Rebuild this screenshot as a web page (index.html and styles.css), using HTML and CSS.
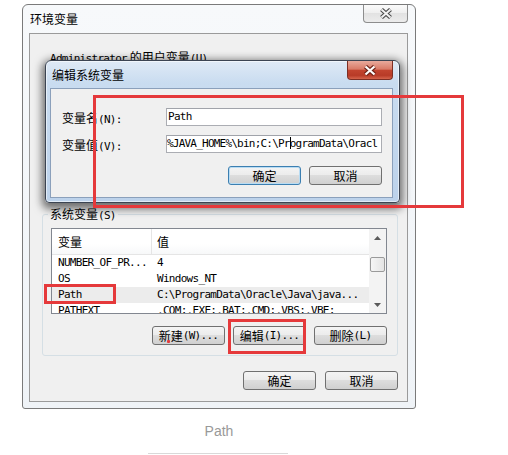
FILE: index.html
```html
<!DOCTYPE html>
<html lang="zh-CN">
<head>
<meta charset="utf-8">
<title>环境变量</title>
<link rel="stylesheet" href="styles.css">
</head>
<body>
<div class="page">
  <div class="win">
    <div class="win-title">环境变量</div>
    <div class="close close-light">
      <svg width="14" height="11" viewBox="0 0 14 11"><path d="M2.5 1.5 L11.5 9.5 M11.5 1.5 L2.5 9.5" stroke="#4b4b4b" stroke-width="4.2" fill="none"/><path d="M2.5 1.5 L11.5 9.5 M11.5 1.5 L2.5 9.5" stroke="#f2f2f2" stroke-width="2" fill="none"/></svg>
    </div>
    <div class="client">
      <div class="user-label"><span class="m">Administrator</span> 的用户变量<span class="m">(U)</span></div>
      <div class="user-group"></div>
      <fieldset class="group">
        <legend>系统变量<span class="m">(S)</span></legend>
        <div class="list">
          <div class="list-main">
            <div class="list-head"><div class="c1">变量</div><div class="c2">值</div></div>
            <div class="row"><div class="c1 m">NUMBER_OF_PR...</div><div class="c2 m">4</div></div>
            <div class="row"><div class="c1 m">OS</div><div class="c2 m">Windows_NT</div></div>
            <div class="row row-sel"><div class="c1 m">Path</div><div class="c2 m">C:\ProgramData\Oracle\Java\java...</div></div>
            <div class="row"><div class="c1 m">PATHEXT</div><div class="c2 m">.COM;.EXE;.BAT;.CMD;.VBS;.VBE;</div></div>
          </div>
          <div class="scroll">
            <div class="sb-btn"><svg width="7" height="4" viewBox="0 0 7 4"><path d="M0 4 L3.5 0 L7 4Z" fill="#5a5a5a"/></svg></div>
            <div class="sb-track"><div class="thumb"></div></div>
            <div class="sb-btn"><svg width="7" height="4" viewBox="0 0 7 4"><path d="M0 0 L3.5 4 L7 0Z" fill="#5a5a5a"/></svg></div>
          </div>
        </div>
        <div class="btns">
          <div class="btn">新建<span class="m">(W)...</span></div>
          <div class="btn">编辑<span class="m">(I)...</span></div>
          <div class="btn">删除<span class="m">(L)</span></div>
        </div>
      </fieldset>
      <div class="btns btns-bottom">
        <div class="btn">确定</div>
        <div class="btn">取消</div>
      </div>
    </div>
  </div>
  <div class="caption">Path</div>
  <div class="caption-line"></div>
</div>

<div class="dlg">
  <div class="dlg-title">编辑系统变量</div>
  <div class="close close-red">
    <svg width="14" height="11" viewBox="0 0 14 11"><path d="M2.5 1.5 L11.5 9.5 M11.5 1.5 L2.5 9.5" stroke="#6e2419" stroke-width="4.4" fill="none"/><path d="M2.5 1.5 L11.5 9.5 M11.5 1.5 L2.5 9.5" stroke="#ffffff" stroke-width="2.2" fill="none"/></svg>
  </div>
  <div class="dlg-client">
    <div class="form">
      <div class="lbl">变量名<span class="m">(N):</span></div>
      <div class="field m">Path</div>
      <div class="lbl">变量值<span class="m">(V):</span></div>
      <div class="field field-tight m">%JAVA_HOME%\bin;C:\Pr<span class="caret"></span>ogramData\Oracl</div>
    </div>
    <div class="btns dlg-btns">
      <div class="btn btn-default">确定</div>
      <div class="btn">取消</div>
    </div>
  </div>
</div>

<div class="mark mark-a"></div>
<div class="mark mark-b"></div>
<div class="mark mark-c"></div>
<div class="dot"></div>
</body>
</html>
```

FILE: styles.css
```css
html, body {
  margin: 0;
  padding: 0;
}
body {
  width: 508px;
  height: 455px;
  background: #fff;
  position: relative;
  overflow: hidden;
  font-family: "Noto Sans CJK SC", "Noto Sans", sans-serif;
  font-size: 12px;
  color: #000;
}
.m {
  font-family: "DejaVu Sans Mono", "Noto Sans CJK SC", monospace;
  font-size: 11px;
  letter-spacing: -0.7px;
}
.page {
  padding: 4px 0 0 22px;
}
.win {
  position: relative;
  width: 394px;
  height: 405px;
  box-sizing: border-box;
  border: 1px solid #7a7a7a;
  border-radius: 6px 6px 3px 3px;
  background: linear-gradient(#f7f9fb, #eff3f7);
  padding: 0 7px 6px 6px;
}
.win-title {
  height: 28px;
  line-height: 28px;
  padding-left: 1px;
}
.close {
  position: absolute;
  top: 0;
  display: flex;
  align-items: center;
  justify-content: center;
  box-sizing: border-box;
  border-radius: 0 0 4px 4px;
}
.close-light {
  right: 7px;
  width: 45px;
  height: 18px;
  border: 1px solid #8d8d8d;
  border-top: none;
  background: linear-gradient(#fbfbfb, #eeeeee 50%, #e2e2e2 50%, #ececec);
}
.close-red {
  right: 6px;
  width: 46px;
  height: 19px;
  border: 1px solid #7d2f24;
  border-top: none;
  background: linear-gradient(#e9aa9c 0%, #d97b68 45%, #c2442f 52%, #b83b27 80%, #d6644c 100%);
}
.client {
  box-sizing: border-box;
  height: 369px;
  border: 1px solid #9a9a9a;
  background: #f0f0f0;
}
.user-label {
  margin: 16px 0 0 20px;
  height: 14px;
  line-height: 14px;
}
.user-group {
  height: 143px;
}
.group {
  margin: 0 9px 0 12px;
  padding: 7px 10px 10px 8px;
  border: 1px solid #d5dfe5;
  border-radius: 3px;
  min-width: 0;
}
.group legend {
  padding: 0 2px;
  margin-left: -3px;
  line-height: 14px;
  height: 14px;
}
.list {
  display: flex;
  height: 86px;
  box-sizing: border-box;
  border: 1px solid #828790;
  background: #fff;
  overflow: hidden;
}
.list-main {
  flex: 1;
  min-width: 0;
}
.list-head {
  display: flex;
  height: 26px;
  box-sizing: border-box;
  border-bottom: 1px solid #e5e5e5;
  line-height: 25px;
  background: linear-gradient(#ffffff, #ffffff 60%, #f7f8f9);
}
.list-head .c1 {
  border-right: 1px solid #e5e5e5;
}
.c1 {
  width: 100px;
  flex: none;
  box-sizing: border-box;
  padding-left: 6px;
  white-space: nowrap;
  overflow: hidden;
}
.c2 {
  flex: 1;
  padding-left: 5px;
  white-space: nowrap;
  overflow: hidden;
}
.row {
  display: flex;
  height: 16px;
  line-height: 16px;
}
.row-sel {
  background: #ececec;
}
.scroll {
  width: 17px;
  flex: none;
  display: flex;
  flex-direction: column;
  background: #f3f3f3;
}
.sb-btn {
  height: 17px;
  display: flex;
  align-items: center;
  justify-content: center;
}
.sb-track {
  flex: 1;
}
.thumb {
  margin: 11px 0 0 1px;
  width: 15px;
  height: 15px;
  box-sizing: border-box;
  border: 1px solid #9a9a9a;
  border-radius: 2px;
  background: linear-gradient(90deg, #f6f6f6, #e4e4e4);
}
.btns {
  display: flex;
  justify-content: flex-end;
  gap: 8px;
  margin-top: 12px;
}
.btns-bottom {
  margin-top: 15px;
  padding-right: 9px;
  gap: 9px;
}
.btn {
  width: 73px;
  height: 19px;
  box-sizing: border-box;
  border: 1px solid #707070;
  border-radius: 3px;
  background: linear-gradient(#f4f4f4, #ececec 45%, #dddddd 50%, #d0d0d0);
  display: flex;
  align-items: center;
  justify-content: center;
  line-height: 1;
  white-space: nowrap;
}
.btn-default {
  border-color: #3c7fb1;
  box-shadow: inset 0 0 0 1px #b9dcf3;
}
.caption {
  width: 394px;
  margin-top: 12px;
  text-align: center;
  font-family: "Liberation Sans", Arial, sans-serif;
  font-size: 14px;
  line-height: 20px;
  color: #999;
}
.caption-line {
  width: 140px;
  height: 1px;
  margin: 12px 0 0 126px;
  background: #d9d9d9;
}
.dlg {
  position: absolute;
  left: 45px;
  top: 60px;
  width: 355px;
  height: 143px;
  box-sizing: border-box;
  border: 1px solid #3b4452;
  border-radius: 6px 6px 4px 4px;
  background: linear-gradient(#dfeaf6, #c9dcf0 22px, #bcd2eb);
  box-shadow: inset 0 0 0 1px rgba(255, 255, 255, 0.55), 0 3px 9px 3px rgba(0, 0, 0, 0.55);
  padding: 0 6px 4px 4px;
}
.dlg-title {
  height: 27px;
  line-height: 27px;
  padding-left: 2px;
}
.dlg-client {
  height: 110px;
  box-sizing: border-box;
  border: 1px solid #8ba0bb;
  background: #f0f0f0;
  padding: 19px 10px 0 11px;
}
.form {
  display: grid;
  grid-template-columns: 104px 216px;
  row-gap: 9px;
  align-items: center;
}
.lbl {
  white-space: nowrap;
}
.field {
  height: 18px;
  box-sizing: border-box;
  border: 1px solid #abadb3;
  border-top-color: #a0a3aa;
  background: #fff;
  padding: 0 1px 0 1px;
  line-height: 16px;
  white-space: nowrap;
  overflow: hidden;
}
.field-tight {
  padding: 0;
  letter-spacing: -0.78px;
}
.caret {
  display: inline-block;
  width: 0;
  height: 12px;
  border-left: 1px solid #000;
  margin-right: -1px;
  vertical-align: -2px;
}
.dlg-btns {
  margin-top: 13px;
}
.mark {
  position: absolute;
  box-sizing: border-box;
  border: 3px solid #e5393b;
}
.mark-a {
  left: 93px;
  top: 95px;
  width: 371px;
  height: 113px;
}
.mark-b {
  left: 44px;
  top: 284px;
  width: 72px;
  height: 20px;
}
.mark-c {
  left: 228px;
  top: 319px;
  width: 78px;
  height: 35px;
}
.dot {
  position: absolute;
  left: 167px;
  top: 340px;
  width: 3px;
  height: 3px;
  border-radius: 1px;
  background: #e5393b;
}
```
